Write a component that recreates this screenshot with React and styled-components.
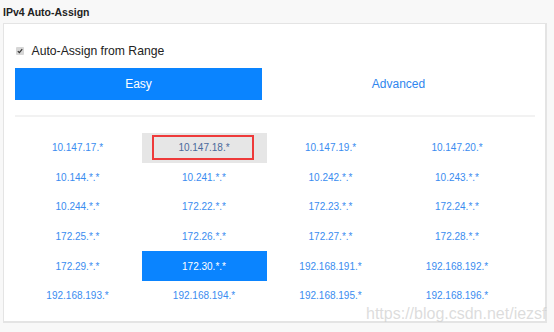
import styled, { createGlobalStyle } from "styled-components";

const GlobalStyle = createGlobalStyle`
  html, body {
    margin: 0;
    padding: 0;
    background: #f8f8f8;
    font-family: "Liberation Sans", Arial, sans-serif;
  }
`;

const Page = styled.div`
  position: relative;
  width: 554px;
  height: 332px;
  padding-left: 3px;
  box-sizing: border-box;
`;

const Title = styled.h2`
  margin: 0;
  height: 23px;
  line-height: 24px;
  font-size: 10.5px;
  font-weight: bold;
  color: #222;
`;

const Panel = styled.section`
  width: 544px;
  height: 300px;
  box-sizing: border-box;
  background: #fff;
  border: 1px solid #e4e4e4;
  border-right-width: 2px;
  border-bottom-width: 2px;
  padding: 20px 0 0 11px;
`;

const CheckRow = styled.label`
  display: flex;
  align-items: center;
  height: 14px;
  gap: 8px;
  font-size: 12.2px;
  color: #222;
`;

const Check = styled.span`
  width: 7.5px;
  height: 7.5px;
  margin-left: 1px;
  background: #d6d6d6;
  border-radius: 1px;
  display: flex;
  align-items: center;
  justify-content: center;
`;

const Tabs = styled.div`
  display: flex;
  width: 520px;
  height: 32px;
  margin-top: 10px;
`;

const Tab = styled.div`
  flex: ${(p) => (p.$active ? "0 0 247px" : "1")};
  display: flex;
  align-items: center;
  justify-content: center;
  font-size: 12px;
  background: ${(p) => (p.$active ? "#0a84ff" : "transparent")};
  color: ${(p) => (p.$active ? "#fff" : "#2f86ee")};
`;

const Divider = styled.div`
  width: 520px;
  height: 2px;
  margin-top: 15px;
  background: #f2f2f2;
`;

const Grid = styled.div`
  display: grid;
  grid-template-columns: repeat(4, 125px);
  grid-auto-rows: 29.6px;
  column-gap: 1.5px;
  margin-top: 16px;
`;

const Cell = styled.div`
  position: relative;
  display: flex;
  align-items: center;
  justify-content: center;
  font-size: 10px;
  background: ${(p) =>
    p.$variant === "active" ? "#0a84ff" : p.$variant === "hover" ? "#e6e6e6" : "transparent"};
  color: ${(p) =>
    p.$variant === "active" ? "#fff" : p.$variant === "hover" ? "#4a6a9c" : "#3a8cf0"};
`;

const Marker = styled.span`
  position: absolute;
  left: 10px;
  top: 1.5px;
  width: 102px;
  height: 25.5px;
  box-sizing: border-box;
  border: 2px solid #ee3a3a;
`;

const Watermark = styled.span`
  position: absolute;
  left: 366px;
  top: 306px;
  font-size: 16px;
  line-height: 16px;
  color: rgba(205, 205, 205, 0.7);
  pointer-events: none;
`;

const ranges = [
  "10.147.17.*", "10.147.18.*", "10.147.19.*", "10.147.20.*",
  "10.144.*.*", "10.241.*.*", "10.242.*.*", "10.243.*.*",
  "10.244.*.*", "172.22.*.*", "172.23.*.*", "172.24.*.*",
  "172.25.*.*", "172.26.*.*", "172.27.*.*", "172.28.*.*",
  "172.29.*.*", "172.30.*.*", "192.168.191.*", "192.168.192.*",
  "192.168.193.*", "192.168.194.*", "192.168.195.*", "192.168.196.*",
];

const variantOf = (r) =>
  r === "172.30.*.*" ? "active" : r === "10.147.18.*" ? "hover" : "plain";

export default function App() {
  return (
    <Page>
      <GlobalStyle />
      <Title>IPv4 Auto-Assign</Title>
      <Panel>
        <CheckRow>
          <Check>
            <svg width="6" height="6" viewBox="0 0 6 6">
              <path d="M0.8 3.1 L2.4 4.7 L5.2 1.2" fill="none" stroke="#333" strokeWidth="1.2" />
            </svg>
          </Check>
          Auto-Assign from Range
        </CheckRow>
        <Tabs>
          <Tab $active>Easy</Tab>
          <Tab>Advanced</Tab>
        </Tabs>
        <Divider />
        <Grid>
          {ranges.map((r) => (
            <Cell key={r} $variant={variantOf(r)}>
              {variantOf(r) === "hover" && <Marker />}
              {r}
            </Cell>
          ))}
        </Grid>
      </Panel>
      <Watermark>https://blog.csdn.net/iezsf</Watermark>
    </Page>
  );
}
